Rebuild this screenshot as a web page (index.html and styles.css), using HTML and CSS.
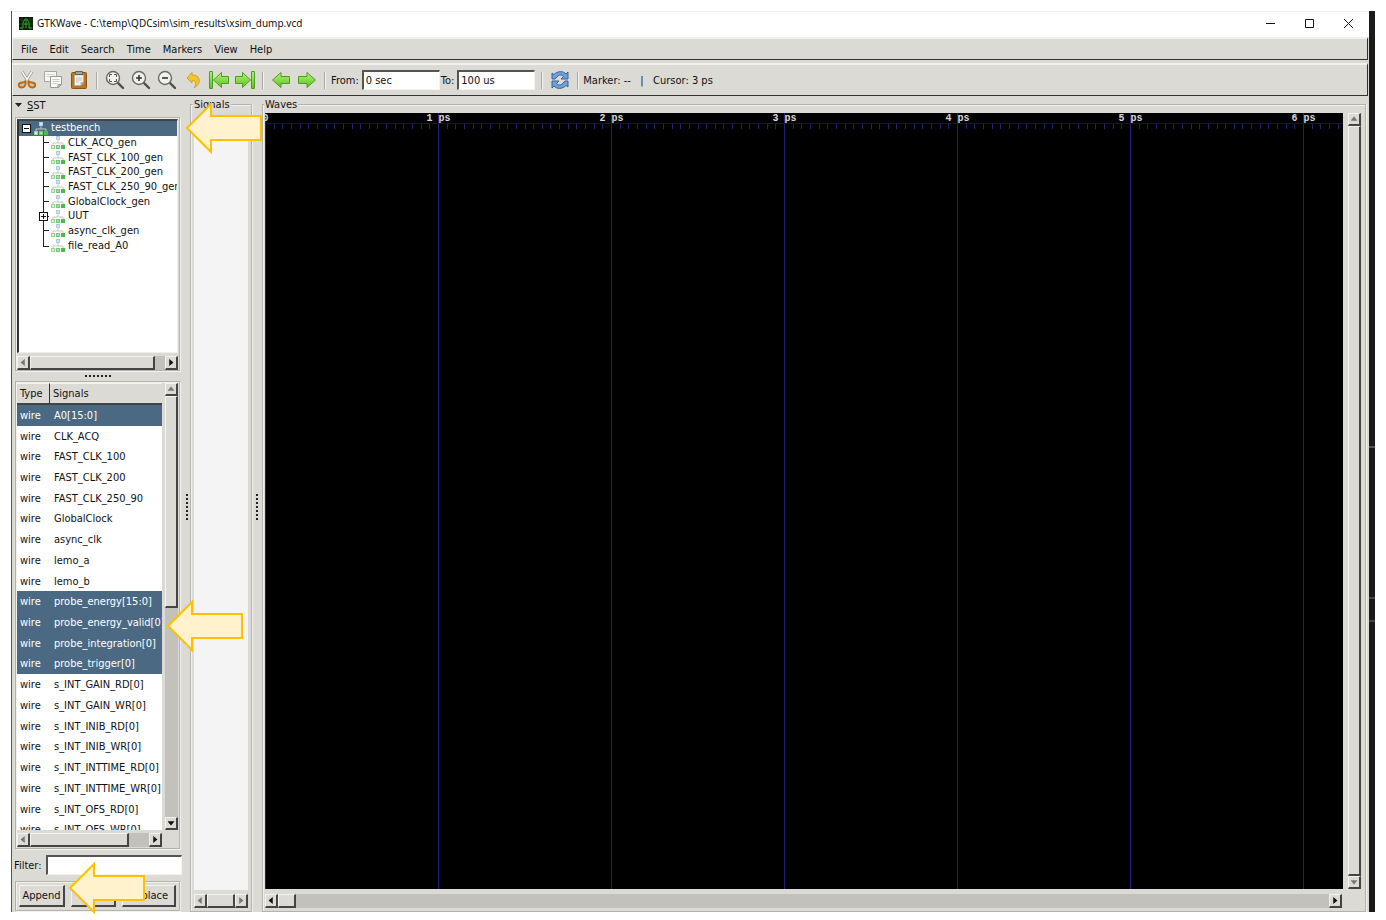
FILE: index.html
```html
<!DOCTYPE html>
<html lang="en">
<head>
  <meta charset="utf-8">
  <title>GTKWave - C:\temp\QDCsim\sim_results\xsim_dump.vcd</title>
  <link rel="stylesheet" href="styles.css">
</head>
<body>
  <svg class="defs" width="0" height="0" aria-hidden="true">
    <defs>
      <linearGradient id="green" x1="0" y1="0" x2="0" y2="1">
        <stop offset="0" stop-color="#b4f078"/>
        <stop offset="1" stop-color="#5cc420"/>
      </linearGradient>
      <symbol id="hier" viewBox="0 0 14 13">
        <path d="M7 4v3M2 9V7h10v2" fill="none" stroke="#c4c8c4"/>
        <rect x="5" y="0" width="4" height="4" fill="#a8cbf2"/>
        <rect x="6" y="1" width="2" height="2" fill="#d3e4f8"/>
        <rect x="0" y="9" width="4" height="4" fill="#9ad69a"/>
        <rect x="1" y="10" width="2" height="2" fill="#d5f0d5"/>
        <rect x="5" y="9" width="4" height="4" fill="#78c878"/>
        <rect x="6" y="10" width="2" height="2" fill="#a8dca8"/>
        <rect x="10" y="9" width="4" height="4" fill="#4fb84f"/>
      </symbol>
      <symbol id="callout" viewBox="0 0 78 52">
        <path d="M2 26 26 2v12h50v24H26v12z" fill="#fff2cc" stroke="#ffc000" stroke-width="2"/>
      </symbol>
      <symbol id="lens" viewBox="0 0 20 20">
        <path d="m13 13 5 5" stroke="#4c4e4a" stroke-width="2.400" stroke-linecap="round"/>
        <circle cx="8" cy="8" r="6.500" fill="#f1f1ee" stroke="#686a66" stroke-width="1.400"/>
      </symbol>
    </defs>
  </svg>

  <div class="window">
    <header class="titlebar">
      <svg class="app-icon" width="14" height="13" viewBox="0 0 14 13">
        <rect width="14" height="13" fill="#061706"/>
        <path d="M0 3h14M0 7h14M0 11h14M3 0v13M11 0v13" stroke="#12480f"/>
        <path d="M1 11h3V6l2-4h2l2 4v5h3M5 7h4M7 3v8" fill="none" stroke="#35a52b"/>
      </svg>
      <h1>GTKWave - C:\temp\QDCsim\sim_results\xsim_dump.vcd</h1>
      <div class="window-controls">
        <button aria-label="Minimize"><svg width="11" height="11"><path d="M1 5.500h9" stroke="#111"/></svg></button>
        <button aria-label="Maximize"><svg width="11" height="11"><path d="M1.500 1.500h8v8h-8z" fill="none" stroke="#111"/></svg></button>
        <button aria-label="Close"><svg width="11" height="11"><path d="m1 1 9 9M10 1l-9 9" stroke="#111"/></svg></button>
      </div>
    </header>

    <nav class="menubar">
      <button>File</button>
      <button>Edit</button>
      <button>Search</button>
      <button>Time</button>
      <button>Markers</button>
      <button>View</button>
      <button>Help</button>
    </nav>

    <div class="toolbar">
      <button class="tool" aria-label="Cut">
        <svg width="20" height="20" viewBox="0 0 20 20">
          <path d="M5 1.500 11.500 12M15 1.500 8.500 12" stroke="#8e908c" stroke-width="3"/>
          <path d="M5 1.500 11.500 12M15 1.500 8.500 12" stroke="#f4f4f2" stroke-width="1.600"/>
          <path d="M8.500 11.500c.5 4-1 6-4 6s-3.500-3.500-1.500-4.500 3.500 0 5.500-1.500zM11.500 11.500c-.5 4 1 6 4 6s3.500-3.500 1.500-4.500-3.500 0-5.500-1.500z" fill="#c8c3b6" stroke="#b86b0d" stroke-width="2"/>
        </svg>
      </button>
      <button class="tool" aria-label="Copy">
        <svg width="20" height="20" viewBox="0 0 20 20">
          <path d="M1.500 1.500h12v10h-12z" fill="#f7f7f6" stroke="#a5a7a3"/>
          <path d="M3.500 4.500h8M3.500 6.500h8" stroke="#d3d4d1"/>
          <path d="M7.500 6.500h11v8l-3.500 3H7.500z" fill="#fafaf9" stroke="#979995"/>
          <path d="M9.500 9.500h7M9.500 11.500h7M9.500 13.500h4" stroke="#c9cac7"/>
          <path d="M18.500 14.500H15v3z" fill="#d0d1ce" stroke="#979995"/>
        </svg>
      </button>
      <button class="tool" aria-label="Paste">
        <svg width="20" height="20" viewBox="0 0 20 20">
          <rect x="2.500" y="2.500" width="15" height="16" rx="1" fill="#b9761c" stroke="#8a540c"/>
          <path d="M5.500 5h9v8L12 15.500H5.500z" fill="#f3f3f1" stroke="#a9a9a4" stroke-width=".6"/>
          <path d="M7 8h6M7 10h6M7 12h3" stroke="#bdbeba"/>
          <path d="M14.500 12.500H12v3z" fill="#c4c5c1" stroke="#8f918d" stroke-width=".6"/>
          <path d="M6.500 1.500h7v3h-7z" fill="#a1a39e" stroke="#60625e"/>
        </svg>
      </button>
      <span class="sep"></span>
      <button class="tool" aria-label="Zoom fit">
        <svg width="20" height="20" viewBox="0 0 20 20">
          <use href="#lens"/>
          <path d="M4.500 7V4.500H7M9 4.500h2.500V7M11.500 9v2.500H9M7 11.500H4.500V9" fill="none" stroke="#555"/>
        </svg>
      </button>
      <button class="tool" aria-label="Zoom in">
        <svg width="20" height="20" viewBox="0 0 20 20">
          <use href="#lens"/>
          <path d="M5 8h6M8 5v6" stroke="#333" stroke-width="1.600"/>
        </svg>
      </button>
      <button class="tool" aria-label="Zoom out">
        <svg width="20" height="20" viewBox="0 0 20 20">
          <use href="#lens"/>
          <path d="M5 8h6" stroke="#333" stroke-width="1.600"/>
        </svg>
      </button>
      <button class="tool" aria-label="Undo zoom">
        <svg width="20" height="20" viewBox="0 0 20 20">
          <path d="m4 8 5-5.500V5c8-.5 10.500 8 2 13 1.500-1.500 3.500-8-2-7.500V13z" fill="#f3c52c" stroke="#c99710" stroke-width=".8"/>
        </svg>
      </button>
      <button class="tool" aria-label="Zoom to start">
        <svg width="22" height="20" viewBox="0 0 22 20">
          <path d="M1.500 1.500h3v17h-3z" fill="url(#green)" stroke="#4a9f1c"/>
          <path d="m5.500 10 8-7.500v4h7v7h-7v4z" fill="url(#green)" stroke="#4a9f1c"/>
        </svg>
      </button>
      <button class="tool" aria-label="Zoom to end">
        <svg width="22" height="20" viewBox="0 0 22 20">
          <path d="M17.500 1.500h3v17h-3z" fill="url(#green)" stroke="#4a9f1c"/>
          <path d="m16.500 10-8-7.500v4h-7v7h7v4z" fill="url(#green)" stroke="#4a9f1c"/>
        </svg>
      </button>
      <span class="sep"></span>
      <button class="tool" aria-label="Previous edge">
        <svg width="20" height="20" viewBox="0 0 20 20">
          <path d="m1.500 10 8.500-7.500v4h8.500v7H10v4z" fill="url(#green)" stroke="#4a9f1c"/>
        </svg>
      </button>
      <button class="tool" aria-label="Next edge">
        <svg width="20" height="20" viewBox="0 0 20 20">
          <path d="M18.500 10 10 2.500v4H1.500v7H10v4z" fill="url(#green)" stroke="#4a9f1c"/>
        </svg>
      </button>
      <span class="sep"></span>
      <label for="from">From:</label>
      <input class="field time" id="from" type="text" value="0 sec">
      <label for="to">To:</label>
      <input class="field time" id="to" type="text" value="100 us">
      <span class="sep wide"></span>
      <button class="tool" aria-label="Reload">
        <svg width="20" height="20" viewBox="0 0 20 20">
          <path d="M2 9V3l2 1.500C8 .5 13.500 1 16 4l2-2v7h-7l2.500-2.500C11.500 4.500 9 4.500 7 7L5 9z" fill="#6f9fd8" stroke="#2d5a95" stroke-width=".9"/>
          <path d="M18 11v6l-2-1.500c-4 4-9.500 3.500-12 .5l-2 2v-7h7l-2.500 2.500c2 2 4.500 2 6.500-.5l2-2z" fill="#6f9fd8" stroke="#2d5a95" stroke-width=".9"/>
        </svg>
      </button>
      <span class="sep"></span>
      <span class="status">Marker: --&nbsp;&nbsp; |&nbsp;&nbsp; Cursor: 3 ps</span>
    </div>

    <main class="main">
      <aside class="sidebar">
        <button class="expander">
          <svg width="7" height="5"><path d="M0 0h7L3.500 4z" fill="#222"/></svg>
          <span><u>S</u>ST</span>
        </button>

        <section class="frame tree-frame">
          <div class="tree">
            <ul class="tree-list" id="tree"></ul>
          </div>
          <div class="hscroll">
            <button class="arrow left off" aria-label="Scroll left"></button>
            <div class="thumb" style="width: 125px"></div>
            <button class="arrow right" aria-label="Scroll right"></button>
          </div>
        </section>

        <div class="grip-h"></div>

        <section class="frame signal-frame">
          <div class="signal-body">
            <div class="signal-view">
              <table class="signal-table">
                <thead>
                  <tr><th class="type">Type</th><th>Signals</th></tr>
                </thead>
                <tbody id="signals"></tbody>
              </table>
            </div>
            <div class="vscroll">
              <button class="arrow up off" aria-label="Scroll up"></button>
              <div class="thumb" style="height: 212px"></div>
              <button class="arrow down" aria-label="Scroll down"></button>
            </div>
          </div>
          <div class="hscroll">
            <button class="arrow left off" aria-label="Scroll left"></button>
            <div class="thumb" style="width: 99px"></div>
            <button class="arrow right" aria-label="Scroll right"></button>
          </div>
        </section>

        <div class="filter">
          <label for="filter">Filter:</label>
          <input class="field" id="filter" type="text">
        </div>

        <div class="frame actions">
          <button>Append</button>
          <button>Insert</button>
          <button>Replace</button>
        </div>
      </aside>

      <div class="grip-v"></div>

      <section class="panel names">
        <h2>Signals</h2>
        <div class="names-view"></div>
        <div class="hscroll">
          <button class="arrow left off" aria-label="Scroll left"></button>
          <div class="thumb full"></div>
          <button class="arrow right off" aria-label="Scroll right"></button>
        </div>
      </section>

      <div class="grip-v"></div>

      <section class="panel waves">
        <h2>Waves</h2>
        <div class="waves-body">
          <div class="wave-view">
            <svg class="grid" width="100%" height="100%">
              <defs>
                <pattern id="ps" width="173" height="2000" patternUnits="userSpaceOnUse">
                  <path d="M.5 0v2000" stroke="#20207c"/>
                  <path d="M9.500 11v5m8-5v5m9-5v5m9-5v5m8-5v5m9-5v5m9-5v5m8-5v5m9-5v5m9-5v5m8-5v5m9-5v5m8-5v5m9-5v5m9-5v5m8-5v5m9-5v5m9-5v5m8-5v5" stroke="#20207c"/>
                  <path d="M0 10.500h173" stroke="#14144c"/>
                </pattern>
              </defs>
              <rect width="100%" height="100%" fill="url(#ps)"/>
            </svg>
            <ol class="times">
              <li>0</li>
              <li>1 ps</li>
              <li>2 ps</li>
              <li>3 ps</li>
              <li>4 ps</li>
              <li>5 ps</li>
              <li>6 ps</li>
            </ol>
          </div>
          <div class="vscroll">
            <button class="arrow up off" aria-label="Scroll up"></button>
            <div class="thumb full"></div>
            <button class="arrow down off" aria-label="Scroll down"></button>
          </div>
        </div>
        <div class="hscroll">
          <button class="arrow left" aria-label="Scroll left"></button>
          <div class="thumb" style="width: 18px"></div>
          <button class="arrow right" aria-label="Scroll right"></button>
        </div>
      </section>
    </main>

    <svg class="callout at-tree" width="78" height="52"><use href="#callout"/></svg>
    <svg class="callout at-probes" width="78" height="52"><use href="#callout"/></svg>
    <svg class="callout at-append" width="78" height="52"><use href="#callout"/></svg>
  </div>
  <div class="backdrop"></div>

  <script src="script.js"></script>
</body>
</html>
```

FILE: styles.css
```css
* {
  box-sizing: border-box;
}

body {
  margin: 0;
  padding: 11px 11px 8px;
  height: 100vh;
  display: flex;
  background: #fff;
  color: #111;
  font-family: "DejaVu Sans Condensed", "DejaVu Sans", sans-serif;
  font-size: 11px;
  line-height: 15px;
}

button, input {
  font: inherit;
  color: inherit;
  margin: 0;
  padding: 0;
}

button {
  border: none;
  background: none;
}

ul, ol {
  margin: 0;
  padding: 0;
  list-style: none;
}

.defs {
  position: absolute;
}

.window {
  position: relative;
  flex: 1;
  min-width: 0;
  display: flex;
  flex-direction: column;
  background: #dcdad5;
  border-left: 1px solid #555;
}

.backdrop {
  width: 6px;
  background:
    linear-gradient(#555, #555) 0 435px / 6px 2px no-repeat,
    linear-gradient(#444, #444) 0 586px / 6px 2px no-repeat,
    linear-gradient(#444, #444) 0 609px / 6px 2px no-repeat,
    #1b1b1b;
}

/* title bar */
.titlebar {
  display: flex;
  align-items: center;
  height: 26px;
  padding: 0 7px 2px;
  background: #fff;
  border-top: 1px solid #eee;
}

.titlebar h1 {
  flex: 1;
  margin: 0 0 0 4px;
  font-family: "Noto Sans", sans-serif;
  font-size: 10px;
  font-weight: normal;
}

.window-controls {
  display: flex;
  gap: 12px;
}

.window-controls button {
  width: 27px;
  height: 20px;
}

.window-controls svg, .tool svg, .expander svg {
  display: block;
  margin: auto;
}

/* menu and tool bars */
.menubar, .toolbar {
  display: flex;
  align-items: center;
  margin-right: 1px;
  border: solid;
  border-width: 2px 1px 1px;
  border-color: #f2f1ee #333 #333 #f2f1ee;
}

.menubar {
  height: 23px;
  gap: 12px;
  padding: 0 8px;
}

.toolbar {
  height: 33px;
  margin-top: 3px;
  margin-bottom: 2px;
  padding: 1px;
}

.tool {
  flex: none;
  width: 26px;
  height: 26px;
}

.sep {
  flex: none;
  width: 2px;
  height: 17px;
  margin: 0 4px;
  border-left: 1px solid #aaa8a3;
  border-right: 1px solid #f4f3f0;
}

.sep.wide {
  margin-left: 6px;
}

.toolbar label {
  margin: 0 3px 0 1px;
}

.field {
  min-width: 0;
  height: 20px;
  padding: 0 2px;
  background: #fff;
  border: solid;
  border-width: 2px 1px 1px 2px;
  border-color: #555 #f4f3f0 #f4f3f0 #555;
}

.time {
  width: 78px;
}

.status {
  white-space: nowrap;
}

/* panes */
.main {
  flex: 1;
  min-height: 0;
  display: flex;
}

.sidebar {
  width: 171px;
  display: flex;
  flex-direction: column;
}

.expander {
  display: flex;
  align-items: center;
  gap: 5px;
  height: 15px;
  margin-left: 3px;
}

.expander svg {
  margin: 0;
}

.frame {
  margin: 0 3px;
  padding: 1px;
  border: 1px solid #b4b2ad;
  box-shadow: inset 1px 1px #f2f1ee, 1px 1px #f2f1ee;
}

.tree-frame {
  height: 254px;
  margin-top: 4px;
}

.tree {
  height: 234px;
  margin-bottom: 3px;
  overflow: hidden;
  background: #fff;
  border: solid;
  border-width: 2px 1px 1px 2px;
  border-color: #444 #eee #eee #333;
}

.tree-list {
  display: grid;
  grid-auto-rows: 1fr;
  height: 132px;
}

.tree-list li {
  position: relative;
  display: flex;
  align-items: center;
  gap: 3px;
  padding-left: 32px;
  line-height: 14px;
  white-space: nowrap;
}

.tree-list svg {
  flex: none;
}

/* connector lines of child rows */
.tree-list li::before {
  content: "";
  position: absolute;
  left: 24px;
  top: 0;
  width: 6px;
  height: 100%;
  background:
    linear-gradient(#222, #222) 0 0 / 1px 100% no-repeat,
    linear-gradient(#222, #222) 0 50% / 6px 1px no-repeat;
}

.tree-list li:last-child::before {
  height: 50%;
  border-bottom: 1px solid #222;
  background: linear-gradient(#222, #222) 0 0 / 1px 100% no-repeat;
}

.tree-list .root {
  padding-left: 15px;
}

.tree-list .root::before {
  display: none;
}

.toggle {
  position: absolute;
  left: 20px;
  top: 3px;
  width: 9px;
  height: 9px;
  border: 1px solid #111;
  background:
    linear-gradient(#111, #111) 50% 50% / 5px 1px no-repeat,
    #fff;
}

.toggle.closed {
  background:
    linear-gradient(#111, #111) 50% 50% / 5px 1px no-repeat,
    linear-gradient(#111, #111) 50% 50% / 1px 5px no-repeat,
    #fff;
}

.root .toggle {
  left: 3px;
}

.selected {
  background: #4b6983;
  color: #fff;
}

.signal-frame {
  flex: 1;
  min-height: 0;
  display: flex;
  flex-direction: column;
}

.signal-body {
  flex: 1;
  min-height: 0;
  display: flex;
  justify-content: space-between;
  margin-bottom: 3px;
}

.signal-frame .hscroll {
  width: 145px;
}

.signal-view {
  width: 145px;
  overflow: hidden;
  background: #fff;
}

.signal-table {
  width: 145px;
  height: 478px;
  table-layout: fixed;
  border-collapse: separate;
  border-spacing: 0;
}

.signal-table th {
  height: 22px;
  padding: 1px 3px;
  background: #dcdad5;
  border: solid;
  border-width: 1px 1px 2px 0;
  border-color: #f2f1ee #333 #444;
  font-weight: normal;
  text-align: left;
}

.signal-table th:last-child {
  border-right: none;
}

.signal-table .type {
  width: 33px;
}

.signal-table td {
  padding: 0 3px;
  overflow: hidden;
  white-space: nowrap;
}

.signal-table td:last-child {
  padding: 0 0 0 4px;
}

.filter {
  display: flex;
  align-items: center;
  gap: 4px;
  padding: 6px 1px 6px 2px;
}

.filter .field {
  flex: 1;
}

.actions {
  display: grid;
  grid-template-columns: 46px 45px 1fr;
  gap: 6px;
  height: 30px;
  margin-bottom: 1px;
  padding: 3px;
}

.actions button {
  border: solid;
  border-width: 1px 2px 2px 1px;
  border-color: #f4f3f0 #444 #444 #f4f3f0;
}

/* pane grips */
.grip-h {
  flex: none;
  width: 28px;
  height: 10px;
  margin: 0 auto;
  background: radial-gradient(circle, #222 1px, transparent 1px) 0 50% / 4px 4px repeat-x;
}

.grip-v {
  flex: none;
  width: 5px;
  height: 28px;
  margin: 395px 1px auto;
  background: radial-gradient(circle, #222 1px, transparent 1px) 50% 0 / 4px 4px repeat-y;
}

/* signal names and waves */
.panel {
  display: flex;
  flex-direction: column;
  margin-top: 6px;
  border: 1px solid #b4b2ad;
  box-shadow: inset 1px 1px #f2f1ee, 1px 0 #f2f1ee;
}

.panel h2 {
  align-self: flex-start;
  height: 15px;
  margin: -8px 0 1px -1px;
  padding: 0 1px;
  background: #dcdad5;
  font-size: 11px;
  font-weight: normal;
}

.names {
  width: 62px;
  margin-right: 1px;
  padding: 0 3px 3px;
}

.names-view {
  flex: 1;
  margin-bottom: 4px;
  background: linear-gradient(#d8d8d8, #d8d8d8) 0 0 / 100% 14px no-repeat, #f4f4f4;
}

.waves {
  flex: 1;
  min-width: 0;
  margin-left: 2px;
  margin-right: 3px;
  padding: 0 4px 3px 2px;
}

.waves-body {
  flex: 1;
  min-height: 0;
  display: flex;
  gap: 5px;
}

.wave-view {
  flex: 1;
  min-width: 0;
  position: relative;
  overflow: hidden;
  margin-bottom: 5px;
  background: #000;
}

.grid {
  display: block;
}

.times {
  position: absolute;
  top: 0;
  left: -86px;
  display: flex;
  color: #d8d8d0;
  font: bold 10px/11px "Liberation Mono", monospace;
}

.times li {
  width: 173px;
  text-align: center;
}

.waves .hscroll {
  margin-right: 19px;
}

/* scroll bars */
.hscroll, .vscroll {
  flex: none;
  display: flex;
  background: #c3c1bc;
}

.hscroll {
  height: 14px;
}

.vscroll {
  flex-direction: column;
  width: 13px;
}

.waves .vscroll {
  margin-bottom: 5px;
}

.arrow {
  flex: none;
  display: flex;
  align-items: center;
  justify-content: center;
  width: 13px;
  height: 13px;
}

.hscroll .arrow {
  height: 14px;
}

.arrow, .thumb {
  background: #dcdad5;
  border: solid;
  border-width: 1px 2px 2px 1px;
  border-color: #f4f3f0 #444 #444 #f4f3f0;
}

.thumb {
  flex: none;
}

.thumb.full {
  flex: 1;
}

.right {
  margin-left: auto;
}

.down {
  margin-top: auto;
}

.arrow::before {
  content: "";
  width: 7px;
  height: 7px;
  background: #111;
}

.arrow.off::before {
  background: #777;
}

.left::before {
  clip-path: polygon(75% 0, 75% 100%, 15% 50%);
}

.right::before {
  clip-path: polygon(25% 0, 25% 100%, 85% 50%);
}

.up::before {
  clip-path: polygon(0 75%, 100% 75%, 50% 15%);
}

.down::before {
  clip-path: polygon(0 25%, 100% 25%, 50% 85%);
}

/* pointer arrows over the window */
.callout {
  position: absolute;
}

.at-tree {
  left: 173px;
  top: 91px;
}

.at-probes {
  left: 154px;
  top: 589px;
}

.at-append {
  left: 56px;
  top: 851px;
}
```

FILE: script.js
```js
const scopes = [
  "testbench",
  "CLK_ACQ_gen",
  "FAST_CLK_100_gen",
  "FAST_CLK_200_gen",
  "FAST_CLK_250_90_gen",
  "GlobalClock_gen",
  "UUT",
  "async_clk_gen",
  "file_read_A0"
];

const signals = [
  "A0[15:0]",
  "CLK_ACQ",
  "FAST_CLK_100",
  "FAST_CLK_200",
  "FAST_CLK_250_90",
  "GlobalClock",
  "async_clk",
  "lemo_a",
  "lemo_b",
  "probe_energy[15:0]",
  "probe_energy_valid[0]",
  "probe_integration[0]",
  "probe_trigger[0]",
  "s_INT_GAIN_RD[0]",
  "s_INT_GAIN_WR[0]",
  "s_INT_INIB_RD[0]",
  "s_INT_INIB_WR[0]",
  "s_INT_INTTIME_RD[0]",
  "s_INT_INTTIME_WR[0]",
  "s_INT_OFS_RD[0]",
  "s_INT_OFS_WR[0]",
  "s_INT_RUN_RD[0]"
];

const icon = '<svg width="14" height="13"><use href="#hier"/></svg>';

document.getElementById("tree").innerHTML = scopes.map((name, i) => {
  const root = i === 0;
  let toggle = "";
  if (root) toggle = '<button class="toggle" aria-label="Collapse"></button>';
  if (name === "UUT") toggle = '<button class="toggle closed" aria-label="Expand"></button>';
  return `<li class="${root ? "root selected" : ""}">${toggle}${icon}<span>${name}</span></li>`;
}).join("");

document.getElementById("signals").innerHTML = signals.map(name => {
  const selected = name === "A0[15:0]" || name.startsWith("probe_");
  return `<tr class="${selected ? "selected" : ""}"><td>wire</td><td>${name}</td></tr>`;
}).join("");
```
